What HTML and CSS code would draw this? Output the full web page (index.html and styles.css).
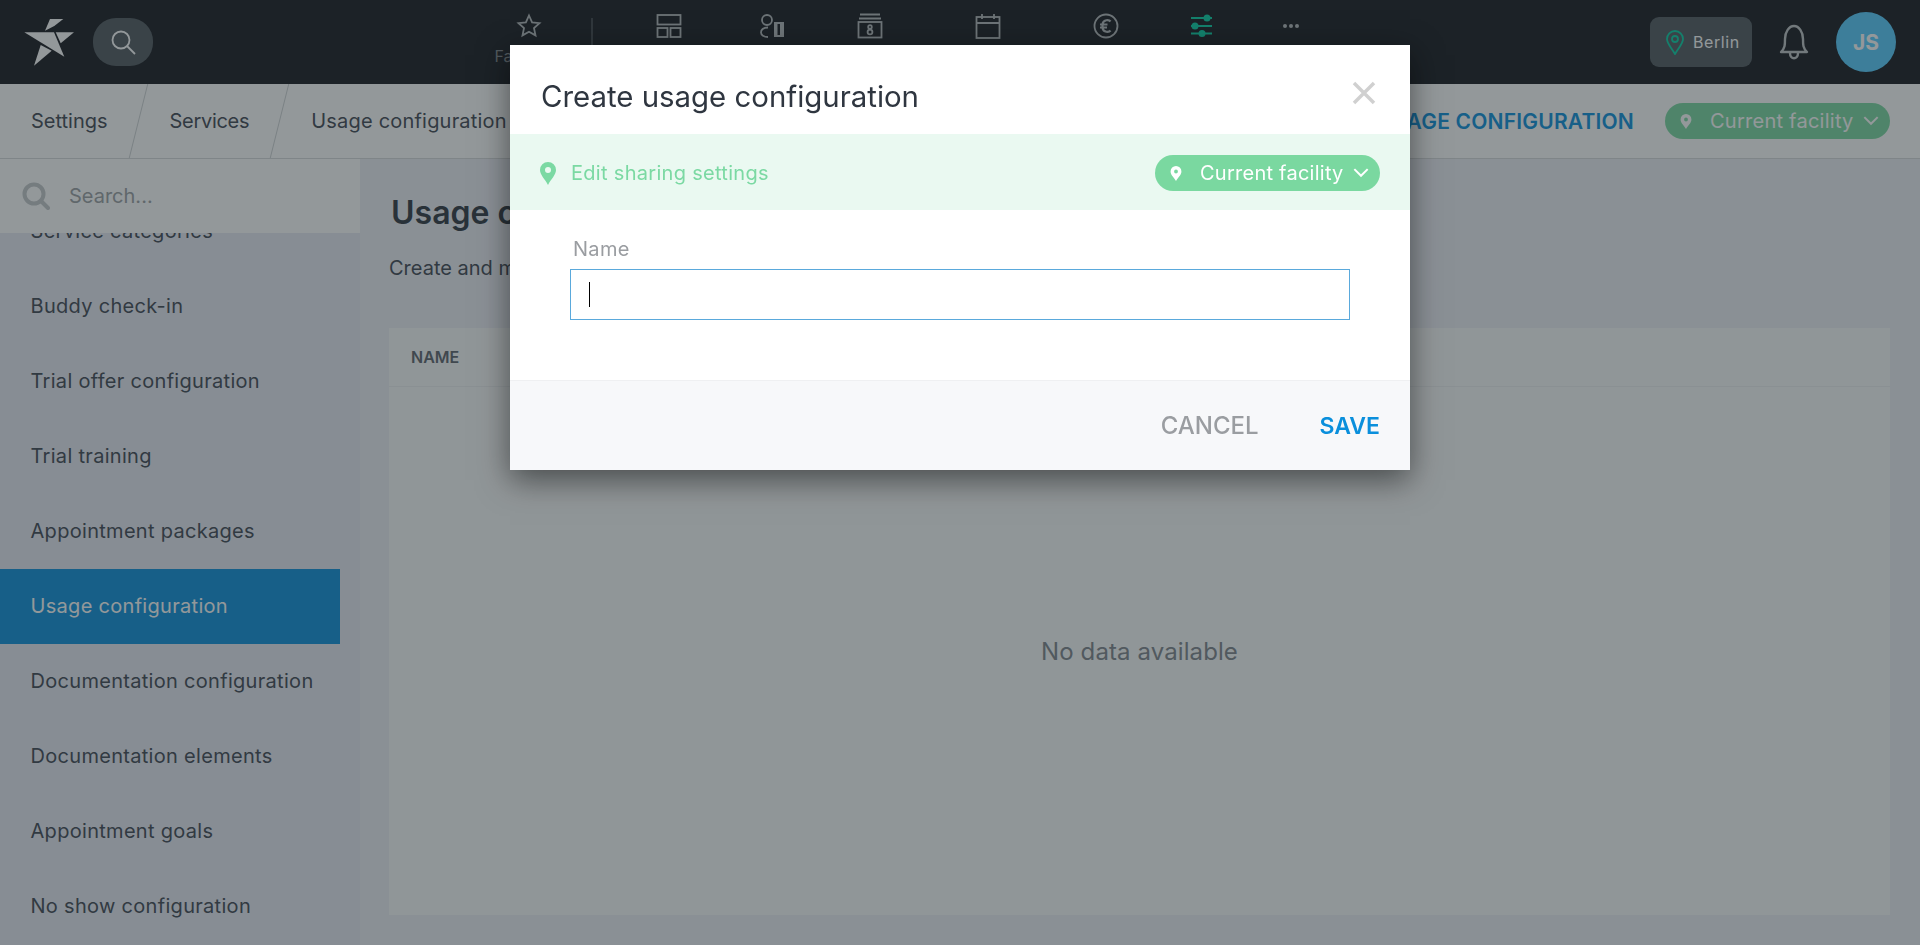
FILE: index.html
```html
<!DOCTYPE html>
<html lang="en">
<head>
<meta charset="utf-8">
<title>Usage configuration</title>
<link rel="stylesheet" href="styles.css">
</head>
<body>
<div class="app">
  <header class="topbar">
    <svg class="logo" viewBox="20 15 60 55" width="60" height="55">
      <path class="logo-shard" d="M45 30.700 50 19H63.300L54.300 26Z"/>
      <path class="logo-shard" d="M24.300 32.300H54L64.300 56.700Z"/>
      <path class="logo-shard" d="M55.700 32.300H74L60.700 43.300Z"/>
      <path class="logo-shard" d="M40.700 45 51.700 50.700 34 65.700Z"/>
    </svg>
    <div class="search-pill">
      <svg viewBox="0 0 26 26" width="26" height="26"><circle cx="11" cy="11" r="8.5"/><path d="M17 17 25 25"/></svg>
    </div>
    <nav class="topnav">
      <div class="nav-item w88">
        <svg viewBox="0 0 26 26" width="26" height="26"><path d="M13 2.500l3.100 6.800 7.400.8-5.500 5 1.500 7.300-6.500-3.700-6.500 3.700 1.500-7.300-5.500-5 7.400-.8z"/></svg>
        <span class="nav-label">Favorites</span>
      </div>
      <span class="nav-sep"></span>
      <div class="nav-item w118">
        <svg viewBox="0 0 26 26" width="26" height="26"><rect x="1.500" y="2" width="23" height="9.500"/><rect x="1.500" y="15" width="10" height="9"/><rect x="14.500" y="15" width="10" height="9"/></svg>
      </div>
      <div class="nav-item w88">
        <svg viewBox="0 0 26 26" width="26" height="26"><circle cx="8" cy="7" r="5"/><path d="M9 14.500C4 14.500 2 17 2 19.500S5 24 9 24"/><path class="fill" fill-rule="evenodd" d="M15 9H25V24H15ZM18.500 11V22H21V11Z"/></svg>
      </div>
      <div class="nav-item w108">
        <svg viewBox="0 0 26 26" width="26" height="26"><path d="M3 1.500H23M2 5.500H24"/><rect x="1.500" y="9" width="23" height="15.500"/><circle cx="13" cy="14" r="1.800"/><circle cx="13" cy="19" r="2.400"/></svg>
      </div>
      <div class="nav-item w128">
        <svg viewBox="0 0 26 26" width="26" height="26"><rect x="1.500" y="4" width="23" height="21"/><path d="M1.500 10H24.500M7 1V6M19 1V6"/></svg>
      </div>
      <div class="nav-item w108">
        <svg viewBox="0 0 26 26" width="26" height="26"><circle cx="13" cy="13" r="11.500"/><path class="euro" d="M17.500 8.500C16 6.500 10.500 6.300 9.500 11V15C10.500 19.700 16 19.500 17.500 17.500M7 11.500H14.500M7 14.500H14"/></svg>
      </div>
      <div class="nav-item w84">
        <svg class="teal" viewBox="0 0 26 26" width="26" height="26"><path d="M2 5H23M2 13H23M2 20.500H23"/><circle class="knob" cx="18" cy="5" r="3.500"/><circle class="knob" cx="6" cy="13" r="3.500"/><circle class="knob" cx="13" cy="20.500" r="3.500"/></svg>
      </div>
      <div class="nav-item w94">
        <span class="dots"><i></i><i></i><i></i></span>
      </div>
    </nav>
    <div class="topright">
      <div class="location">
        <svg class="teal" viewBox="0 0 18 25" width="18" height="25"><path d="M9 24C5 17 1 13.500 1 9a8 8 0 0 1 16 0C17 13.500 13 17 9 24Z"/><circle cx="9" cy="9" r="3"/></svg>
        <span>Berlin</span>
      </div>
      <svg class="bell" viewBox="0 0 30 36" width="30" height="36"><path d="M2 28C6 24 6 21 6 15 6 8 10 2 15 2S24 8 24 15C24 21 24 24 28 28Z"/><path d="M11 29C11 36 19 36 19 29"/></svg>
      <div class="avatar">JS</div>
    </div>
  </header>

  <div class="crumbbar">
    <div class="crumbs">
      <a class="crumb">Settings</a>
      <a class="crumb crumb-tight">Services</a>
      <a class="crumb crumb-wide">Usage configuration</a>
    </div>
    <div class="crumb-actions">
      <span class="add-link">ADD USAGE CONFIGURATION</span>
      <span class="pill pill-dim">
        <svg viewBox="0 0 14 18" width="12" height="15"><path d="M7 18C4 13 .5 10.500 .5 6.500a6.500 6.500 0 0 1 13 0C13.500 10.500 10 13 7 18ZM7 4.300a2.300 2.300 0 1 0 0 4.600 2.300 2.300 0 0 0 0-4.600Z"/></svg>
        <span>Current facility</span>
        <svg class="chev" viewBox="0 0 14 9" width="16" height="10"><path d="M1 1 7 7 13 1"/></svg>
      </span>
    </div>
  </div>

  <div class="main">
    <aside class="sidebar">
      <div class="side-search">
        <svg viewBox="0 0 28 28" width="28" height="28"><circle cx="12" cy="12" r="9.500"/><path d="M19 19 26 26"/></svg>
        <span>Search...</span>
      </div>
      <ul class="side-list">
        <li class="side-item">Service categories</li>
        <li class="side-item">Buddy check-in</li>
        <li class="side-item">Trial offer configuration</li>
        <li class="side-item">Trial training</li>
        <li class="side-item">Appointment packages</li>
        <li class="side-item is-active">Usage configuration</li>
        <li class="side-item">Documentation configuration</li>
        <li class="side-item">Documentation elements</li>
        <li class="side-item">Appointment goals</li>
        <li class="side-item">No show configuration</li>
      </ul>
    </aside>
    <section class="content">
      <h1 class="page-title">Usage configuration</h1>
      <p class="page-sub">Create and manage usage configurations</p>
      <div class="card">
        <div class="card-head">NAME</div>
        <div class="card-empty">No data available</div>
      </div>
    </section>
  </div>
</div>

<div class="scrim">
  <div class="modal">
    <div class="modal-head">
      <h2 class="modal-title">Create usage configuration</h2>
      <svg class="modal-close" viewBox="0 0 24 24" width="24" height="24"><path d="M2 2 22 22M22 2 2 22"/></svg>
    </div>
    <div class="modal-band">
      <div class="band-left">
        <svg viewBox="0 0 16 23" width="16" height="23"><path d="M8 23C5 17 0 13 0 8a8 8 0 0 1 16 0C16 13 11 17 8 23ZM8 5a3 3 0 1 0 0 6 3 3 0 0 0 0-6Z"/></svg>
        <span>Edit sharing settings</span>
      </div>
      <span class="pill">
        <svg viewBox="0 0 14 18" width="12" height="15"><path d="M7 18C4 13 .5 10.500 .5 6.500a6.500 6.500 0 0 1 13 0C13.500 10.500 10 13 7 18ZM7 4.300a2.300 2.300 0 1 0 0 4.600 2.300 2.300 0 0 0 0-4.600Z"/></svg>
        <span>Current facility</span>
        <svg class="chev" viewBox="0 0 14 9" width="16" height="10"><path d="M1 1 7 7 13 1"/></svg>
      </span>
    </div>
    <div class="modal-body">
      <div class="field-label">Name</div>
      <div class="field-input"><span class="caret"></span></div>
    </div>
    <div class="modal-foot">
      <span class="btn btn-cancel">CANCEL</span>
      <span class="btn btn-save">SAVE</span>
    </div>
  </div>
</div>
</body>
</html>
```
FILE: styles.css
```css
* { box-sizing: border-box; }
html, body { margin: 0; height: 100%; overflow: hidden; }
body { font-family: "Inter", "Noto Sans", sans-serif; font-size: 20px; color: #3f4651; background: #eceef4; }
.app { height: 945px; display: flex; flex-direction: column; }

.topbar { height: 84px; flex: none; background: #14161c; display: flex; align-items: center; padding: 0 24px 0 20px; }
.logo { flex: none; }
.logo-shard { fill: #fff; }
.search-pill { width: 60px; height: 48px; border-radius: 23px; background: #50585e; margin-left: 13px; flex: none; display: flex; align-items: center; justify-content: center; }
.search-pill svg, .topnav svg { fill: none; stroke: #b4b8bb; stroke-width: 1.8; }
.search-pill svg { stroke: #fff; }
.topnav { display: flex; align-items: flex-start; height: 84px; margin-left: 332px; padding-top: 13px; }
.nav-item { display: flex; flex-direction: column; align-items: center; gap: 7px; flex: none; }
.w84 { width: 84px; } .w88 { width: 88px; } .w94 { width: 94px; } .w108 { width: 108px; }
.w118 { width: 118px; } .w128 { width: 128px; }
.nav-label { font-size: 16px; color: #7d8388; }
.nav-sep { width: 2px; height: 60px; background: #3c4046; margin: 5px 17px 0 18px; flex: none; }
.topnav .fill { fill: #b4b8bb; stroke: none; }
.topnav .euro { stroke-width: 2.2; }
.topnav svg.teal, .location svg { stroke: #04cfa4; fill: none; }
.topnav svg.teal { stroke-width: 2; }
.topnav .knob { fill: #04cfa4; stroke: none; }
.dots { display: flex; gap: 2px; height: 26px; align-items: center; }
.dots i { width: 4px; height: 4px; border-radius: 50%; background: #b4b8bb; }
.topright { margin-left: auto; display: flex; align-items: center; }
.location { width: 102px; height: 50px; border-radius: 9px; background: #50585e; display: flex; align-items: center; gap: 9px; padding-left: 16px; color: #fff; font-size: 16px; letter-spacing: .6px; }
.location svg { stroke-width: 1.8; }
.bell { margin-left: 27px; fill: none; stroke: #bec2c4; stroke-width: 2.4; stroke-linejoin: round; }
.avatar { width: 60px; height: 60px; border-radius: 50%; background: #55ccff; margin-left: 27px; display: flex; align-items: center; justify-content: center; color: #fff; font-weight: 700; font-size: 21px; }

.crumbbar { height: 75px; flex: none; background: #fff; border-bottom: 1px solid #d8dadc; display: flex; justify-content: space-between; align-items: center; padding-right: 30px; }
.crumbs { display: flex; height: 100%; }
.crumb { position: relative; display: flex; align-items: center; padding: 0 31px; }
.crumb-tight { letter-spacing: -.3px; }
.crumb-wide { letter-spacing: .2px; }
.crumb:not(:last-child)::after { content: ""; position: absolute; right: 0; top: 0; bottom: 0; width: 1px; background: #cfd2d4; transform: skewX(-14deg); }
.crumb-actions { display: flex; align-items: center; gap: 31px; }
.add-link { color: #0a8fdc; font-weight: 600; font-size: 21px; letter-spacing: .2px; white-space: nowrap; }
.pill { display: inline-flex; align-items: center; height: 36px; width: 225px; border-radius: 18px; background: #7ad8a0; color: #fff; padding: 0 12px 0 15px; flex: none; }
.pill svg { fill: #fff; flex: none; }
.pill .chev { fill: none; stroke: #fff; stroke-width: 1.8; margin-left: 9px; }
.pill span { margin-left: 18px; font-size: 20px; letter-spacing: .25px; white-space: nowrap; }

.main { flex: 1; display: flex; min-height: 0; }
.sidebar { width: 360px; flex: none; display: flex; flex-direction: column; background: #e7e9f3; overflow: hidden; }
.side-search { height: 74px; flex: none; background: #fff; display: flex; align-items: center; gap: 19px; padding-left: 22px; color: #9a9ea3; position: relative; z-index: 1; }
.side-search svg { fill: none; stroke: #c4c7ca; stroke-width: 4; stroke-linecap: round; }
.side-list { list-style: none; margin: -39px 0 0; padding: 0; width: 340px; }
.side-item { height: 75px; display: flex; align-items: center; padding: 0 0 2px 30.5px; white-space: nowrap; letter-spacing: .3px; }
.side-item.is-active { background: #0a8fdc; color: #fff; }

.content { flex: 1; min-width: 0; background: #eeeff6; padding: 0 30px 30px 29px; display: flex; flex-direction: column; }
.page-title { margin: 34px 0 0 2px; font-size: 32px; line-height: 40px; font-weight: 600; color: #2f3640; }
.page-sub { margin: 21px 0 0; line-height: 28px; }
.card { flex: 1; margin-top: 46px; background: #fafbfb; display: flex; flex-direction: column; }
.card-head { height: 59px; flex: none; display: flex; align-items: center; padding-left: 22px; font-size: 16px; font-weight: 600; color: #5b626b; border-bottom: 1px solid #eeeff1; }
.card-empty { flex: 1; display: flex; align-items: center; justify-content: center; color: #7d838a; font-size: 24px; letter-spacing: .1px; }

.scrim { position: fixed; inset: 0; background: rgba(36, 46, 50, .494); display: flex; justify-content: center; align-items: flex-start; padding-top: 45px; z-index: 10; }
.modal { width: 900px; height: 425px; background: #fff; box-shadow: 0 10px 30px rgba(0, 0, 0, .5); display: flex; flex-direction: column; }
.modal-head { height: 89px; flex: none; display: flex; align-items: center; justify-content: space-between; padding: 14px 34px 0 31px; }
.modal-title { margin: 0; font-size: 29.4px; font-weight: 400; color: #2f3640; }
.modal-close { fill: none; stroke: #d0d0d0; stroke-width: 3.5; margin-top: -7px; }
.modal-band { height: 76px; flex: none; background: #eaf9f1; display: flex; align-items: center; justify-content: space-between; padding: 2px 30px 0; color: #7bd9a3; }
.band-left { display: flex; align-items: center; gap: 15px; letter-spacing: .3px; }
.band-left svg { fill: #7bd9a3; }
.modal-body { flex: 1; padding: 25px 60px 0; }
.field-label { color: #9a9da1; padding-left: 3px; line-height: 28px; height: 34px; letter-spacing: .3px; }
.field-input { height: 51px; border: 1.5px solid #5aa9dc; display: flex; align-items: center; padding-left: 18px; }
.caret { width: 1px; height: 25px; background: #000; }
.modal-foot { height: 90px; flex: none; background: #f7f8fa; border-top: 1px solid #eff0f2; display: flex; align-items: center; justify-content: flex-end; gap: 61px; padding-right: 30px; }
.btn { font-size: 24px; font-weight: 500; }
.btn-cancel { color: #9a9da1; }
.btn-save { color: #0a8fdc; font-weight: 600; font-size: 23px; }
```
